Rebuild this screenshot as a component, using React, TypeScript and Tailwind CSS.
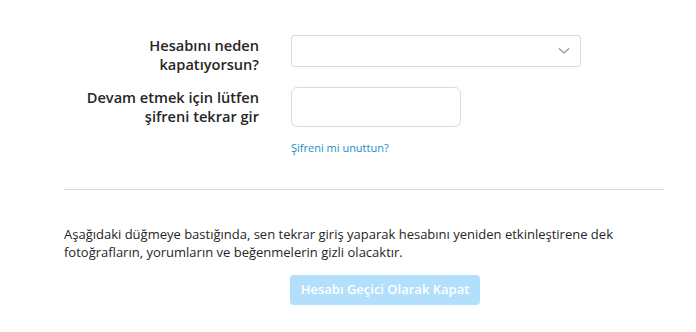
import React from "react";

export default function App() {
  const font = { fontFamily: '"Open Sans", "Noto Sans", sans-serif' };
  return (
    <div className="w-[696px] h-[332px] bg-white text-[#262626]" style={font}>
      <div className="pl-[64px] w-[664px] pt-[35px]">
        <div className="flex items-start">
          <div className="w-[195px] text-right text-[14.6px] leading-[19px] font-semibold pt-[1px]">
            Hesabını neden
            <br />
            kapatıyorsun?
          </div>
          <div className="ml-[32px] w-[290px] h-[32px] border border-[#dbdbdb] rounded-[3px] flex items-center justify-end pr-[10px]">
            <svg width="12" height="8" viewBox="0 0 12 8" fill="none">
              <path d="M1 1.5 L6 6 L11 1.5" stroke="#8e8e8e" strokeWidth="1.1" />
            </svg>
          </div>
        </div>
        <div className="flex items-start mt-[13px]">
          <div className="w-[195px] text-right text-[14.6px] leading-[19px] font-semibold pt-[1px]">
            Devam etmek için lütfen
            <br />
            şifreni tekrar gir
          </div>
          <div className="ml-[32px] flex flex-col">
            <div className="w-[170px] h-[40px] border border-[#dbdbdb] rounded-[6px]" />
            <a className="mt-[13px] text-[11px] leading-[16px] text-[#1a8fc0]">Şifreni mi unuttun?</a>
          </div>
        </div>
        <div className="mt-[33px] h-px bg-[#dbdbdb] w-[600px]" />
        <p className="mt-[35px] text-[13px] leading-[18px]">
          Aşağıdaki düğmeye bastığında, sen tekrar giriş yaparak hesabını yeniden etkinleştirene dek
          <br />
          fotoğrafların, yorumların ve beğenmelerin gizli olacaktır.
        </p>
        <div className="flex justify-center mt-[14px] w-[642px]">
          <button className="h-[30px] px-[11px] rounded-[4px] bg-[#b2dffc] text-white text-[13px] font-semibold">
            Hesabı Geçici Olarak Kapat
          </button>
        </div>
      </div>
    </div>
  );
}
